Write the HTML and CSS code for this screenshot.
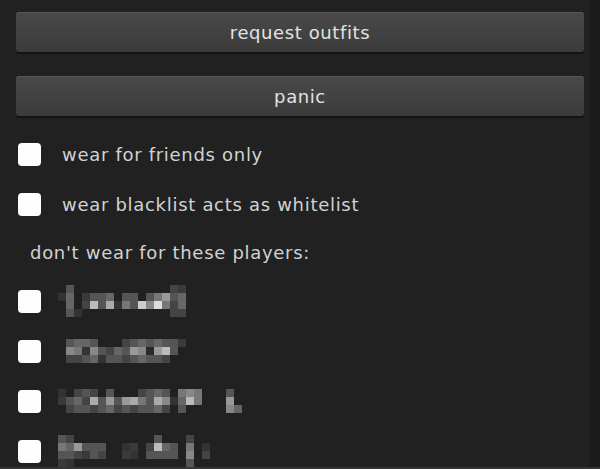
FILE: index.html
```html
<!DOCTYPE html>
<html lang="en">
<head>
    <meta charset="UTF-8">
    <title>Outfits</title>
    <link rel="stylesheet" href="styles.css">
</head>
<body>
    <div class="window">
        <div class="panel">
            <button class="btn first">request outfits</button>
            <button class="btn">panic</button>

            <label class="row opt-first">
                <span class="box"></span>
                <span class="text">wear for friends only</span>
            </label>
            <label class="row">
                <span class="box"></span>
                <span class="text">wear blacklist acts as whitelist</span>
            </label>

            <div class="caption">don't wear for these players:</div>

            <label class="row">
                <span class="box"></span>
                <svg class="name" width="136" height="32" viewBox="0 0 136 32">
                    <rect x="8" y="0" width="8" height="8" fill="#555"/>
                    <rect x="112" y="0" width="8" height="8" fill="#444"/>
                    <rect x="120" y="0" width="8" height="8" fill="#3a3a3a"/>
                    <rect x="0" y="8" width="8" height="8" fill="#333"/>
                    <rect x="8" y="8" width="8" height="8" fill="#666"/>
                    <rect x="24" y="8" width="8" height="8" fill="#3a3a3a"/>
                    <rect x="32" y="8" width="8" height="8" fill="#555"/>
                    <rect x="40" y="8" width="8" height="8" fill="#555"/>
                    <rect x="48" y="8" width="8" height="8" fill="#666"/>
                    <rect x="64" y="8" width="8" height="8" fill="#555"/>
                    <rect x="72" y="8" width="8" height="8" fill="#555"/>
                    <rect x="88" y="8" width="8" height="8" fill="#555"/>
                    <rect x="96" y="8" width="8" height="8" fill="#777"/>
                    <rect x="104" y="8" width="8" height="8" fill="#999"/>
                    <rect x="112" y="8" width="8" height="8" fill="#555"/>
                    <rect x="120" y="8" width="8" height="8" fill="#666"/>
                    <rect x="8" y="16" width="8" height="8" fill="#666"/>
                    <rect x="24" y="16" width="8" height="8" fill="#444"/>
                    <rect x="32" y="16" width="8" height="8" fill="#bbb"/>
                    <rect x="40" y="16" width="8" height="8" fill="#555"/>
                    <rect x="48" y="16" width="8" height="8" fill="#aaa"/>
                    <rect x="56" y="16" width="8" height="8" fill="#333"/>
                    <rect x="64" y="16" width="8" height="8" fill="#777"/>
                    <rect x="72" y="16" width="8" height="8" fill="#555"/>
                    <rect x="80" y="16" width="8" height="8" fill="#ccc"/>
                    <rect x="88" y="16" width="8" height="8" fill="#888"/>
                    <rect x="96" y="16" width="8" height="8" fill="#ddd"/>
                    <rect x="104" y="16" width="8" height="8" fill="#777"/>
                    <rect x="112" y="16" width="8" height="8" fill="#444"/>
                    <rect x="120" y="16" width="8" height="8" fill="#666"/>
                    <rect x="8" y="24" width="8" height="8" fill="#555"/>
                    <rect x="16" y="24" width="8" height="8" fill="#333"/>
                    <rect x="112" y="24" width="8" height="8" fill="#444"/>
                    <rect x="120" y="24" width="8" height="8" fill="#444"/>
                </svg>
            </label>
            <label class="row">
                <span class="box"></span>
                <svg class="name" width="136" height="24" viewBox="0 0 136 24">
                    <rect x="8" y="0" width="8" height="8" fill="#555"/>
                    <rect x="16" y="0" width="8" height="8" fill="#666"/>
                    <rect x="24" y="0" width="8" height="8" fill="#666"/>
                    <rect x="32" y="0" width="8" height="8" fill="#555"/>
                    <rect x="64" y="0" width="8" height="8" fill="#444"/>
                    <rect x="72" y="0" width="8" height="8" fill="#555"/>
                    <rect x="80" y="0" width="8" height="8" fill="#666"/>
                    <rect x="88" y="0" width="8" height="8" fill="#555"/>
                    <rect x="96" y="0" width="8" height="8" fill="#666"/>
                    <rect x="104" y="0" width="8" height="8" fill="#555"/>
                    <rect x="112" y="0" width="8" height="8" fill="#555"/>
                    <rect x="120" y="0" width="8" height="8" fill="#3a3a3a"/>
                    <rect x="8" y="8" width="8" height="8" fill="#888"/>
                    <rect x="16" y="8" width="8" height="8" fill="#777"/>
                    <rect x="24" y="8" width="8" height="8" fill="#333"/>
                    <rect x="32" y="8" width="8" height="8" fill="#888"/>
                    <rect x="40" y="8" width="8" height="8" fill="#555"/>
                    <rect x="48" y="8" width="8" height="8" fill="#444"/>
                    <rect x="56" y="8" width="8" height="8" fill="#666"/>
                    <rect x="64" y="8" width="8" height="8" fill="#555"/>
                    <rect x="72" y="8" width="8" height="8" fill="#999"/>
                    <rect x="80" y="8" width="8" height="8" fill="#888"/>
                    <rect x="88" y="8" width="8" height="8" fill="#2a2a2a"/>
                    <rect x="96" y="8" width="8" height="8" fill="#999"/>
                    <rect x="104" y="8" width="8" height="8" fill="#bbb"/>
                    <rect x="112" y="8" width="8" height="8" fill="#555"/>
                    <rect x="8" y="16" width="8" height="8" fill="#444"/>
                    <rect x="16" y="16" width="8" height="8" fill="#444"/>
                    <rect x="24" y="16" width="8" height="8" fill="#555"/>
                    <rect x="32" y="16" width="8" height="8" fill="#666"/>
                    <rect x="40" y="16" width="8" height="8" fill="#333"/>
                    <rect x="48" y="16" width="8" height="8" fill="#555"/>
                    <rect x="56" y="16" width="8" height="8" fill="#555"/>
                    <rect x="64" y="16" width="8" height="8" fill="#444"/>
                    <rect x="72" y="16" width="8" height="8" fill="#555"/>
                    <rect x="80" y="16" width="8" height="8" fill="#666"/>
                    <rect x="88" y="16" width="8" height="8" fill="#555"/>
                    <rect x="96" y="16" width="8" height="8" fill="#555"/>
                    <rect x="104" y="16" width="8" height="8" fill="#444"/>
                </svg>
            </label>
            <label class="row">
                <span class="box"></span>
                <svg class="name" width="184" height="24" viewBox="0 0 184 24">
                    <rect x="0" y="0" width="8" height="8" fill="#333"/>
                    <rect x="16" y="0" width="8" height="8" fill="#444"/>
                    <rect x="24" y="0" width="8" height="8" fill="#555"/>
                    <rect x="32" y="0" width="8" height="8" fill="#444"/>
                    <rect x="48" y="0" width="8" height="8" fill="#555"/>
                    <rect x="80" y="0" width="8" height="8" fill="#444"/>
                    <rect x="88" y="0" width="8" height="8" fill="#555"/>
                    <rect x="96" y="0" width="8" height="8" fill="#666"/>
                    <rect x="104" y="0" width="8" height="8" fill="#555"/>
                    <rect x="120" y="0" width="8" height="8" fill="#777"/>
                    <rect x="128" y="0" width="8" height="8" fill="#888"/>
                    <rect x="136" y="0" width="8" height="8" fill="#777"/>
                    <rect x="168" y="0" width="8" height="8" fill="#555"/>
                    <rect x="0" y="8" width="8" height="8" fill="#3a3a3a"/>
                    <rect x="8" y="8" width="8" height="8" fill="#555"/>
                    <rect x="16" y="8" width="8" height="8" fill="#666"/>
                    <rect x="24" y="8" width="8" height="8" fill="#444"/>
                    <rect x="32" y="8" width="8" height="8" fill="#aaa"/>
                    <rect x="40" y="8" width="8" height="8" fill="#555"/>
                    <rect x="48" y="8" width="8" height="8" fill="#999"/>
                    <rect x="56" y="8" width="8" height="8" fill="#555"/>
                    <rect x="64" y="8" width="8" height="8" fill="#999"/>
                    <rect x="72" y="8" width="8" height="8" fill="#aaa"/>
                    <rect x="80" y="8" width="8" height="8" fill="#777"/>
                    <rect x="88" y="8" width="8" height="8" fill="#555"/>
                    <rect x="96" y="8" width="8" height="8" fill="#aaa"/>
                    <rect x="104" y="8" width="8" height="8" fill="#888"/>
                    <rect x="112" y="8" width="8" height="8" fill="#333"/>
                    <rect x="120" y="8" width="8" height="8" fill="#666"/>
                    <rect x="128" y="8" width="8" height="8" fill="#bbb"/>
                    <rect x="136" y="8" width="8" height="8" fill="#777"/>
                    <rect x="168" y="8" width="8" height="8" fill="#999"/>
                    <rect x="8" y="16" width="8" height="8" fill="#444"/>
                    <rect x="16" y="16" width="8" height="8" fill="#555"/>
                    <rect x="24" y="16" width="8" height="8" fill="#555"/>
                    <rect x="32" y="16" width="8" height="8" fill="#444"/>
                    <rect x="40" y="16" width="8" height="8" fill="#555"/>
                    <rect x="48" y="16" width="8" height="8" fill="#666"/>
                    <rect x="56" y="16" width="8" height="8" fill="#444"/>
                    <rect x="64" y="16" width="8" height="8" fill="#555"/>
                    <rect x="72" y="16" width="8" height="8" fill="#444"/>
                    <rect x="80" y="16" width="8" height="8" fill="#555"/>
                    <rect x="88" y="16" width="8" height="8" fill="#555"/>
                    <rect x="96" y="16" width="8" height="8" fill="#666"/>
                    <rect x="104" y="16" width="8" height="8" fill="#444"/>
                    <rect x="120" y="16" width="8" height="8" fill="#555"/>
                    <rect x="168" y="16" width="8" height="8" fill="#888"/>
                    <rect x="176" y="16" width="8" height="8" fill="#666"/>
                </svg>
            </label>
            <label class="row">
                <span class="box"></span>
                <svg class="name" width="152" height="32" viewBox="0 0 152 32">
                    <rect x="0" y="0" width="8" height="8" fill="#555"/>
                    <rect x="8" y="0" width="8" height="8" fill="#444"/>
                    <rect x="96" y="0" width="8" height="8" fill="#555"/>
                    <rect x="128" y="0" width="8" height="8" fill="#444"/>
                    <rect x="0" y="8" width="8" height="8" fill="#777"/>
                    <rect x="8" y="8" width="8" height="8" fill="#666"/>
                    <rect x="16" y="8" width="8" height="8" fill="#999"/>
                    <rect x="24" y="8" width="8" height="8" fill="#555"/>
                    <rect x="32" y="8" width="8" height="8" fill="#555"/>
                    <rect x="40" y="8" width="8" height="8" fill="#555"/>
                    <rect x="64" y="8" width="8" height="8" fill="#333"/>
                    <rect x="72" y="8" width="8" height="8" fill="#3a3a3a"/>
                    <rect x="88" y="8" width="8" height="8" fill="#444"/>
                    <rect x="96" y="8" width="8" height="8" fill="#bbb"/>
                    <rect x="104" y="8" width="8" height="8" fill="#666"/>
                    <rect x="112" y="8" width="8" height="8" fill="#555"/>
                    <rect x="128" y="8" width="8" height="8" fill="#777"/>
                    <rect x="144" y="8" width="8" height="8" fill="#333"/>
                    <rect x="0" y="16" width="8" height="8" fill="#555"/>
                    <rect x="8" y="16" width="8" height="8" fill="#555"/>
                    <rect x="16" y="16" width="8" height="8" fill="#444"/>
                    <rect x="24" y="16" width="8" height="8" fill="#3a3a3a"/>
                    <rect x="32" y="16" width="8" height="8" fill="#555"/>
                    <rect x="40" y="16" width="8" height="8" fill="#444"/>
                    <rect x="64" y="16" width="8" height="8" fill="#3a3a3a"/>
                    <rect x="72" y="16" width="8" height="8" fill="#333"/>
                    <rect x="88" y="16" width="8" height="8" fill="#555"/>
                    <rect x="96" y="16" width="8" height="8" fill="#555"/>
                    <rect x="104" y="16" width="8" height="8" fill="#555"/>
                    <rect x="112" y="16" width="8" height="8" fill="#555"/>
                    <rect x="128" y="16" width="8" height="8" fill="#888"/>
                    <rect x="144" y="16" width="8" height="8" fill="#444"/>
                    <rect x="0" y="24" width="8" height="8" fill="#3a3a3a"/>
                    <rect x="8" y="24" width="8" height="8" fill="#333"/>
                    <rect x="128" y="24" width="8" height="8" fill="#555"/>
                </svg>
            </label>
        </div>
        <div class="edge"></div>
    </div>
</body>
</html>
```

FILE: styles.css
```css
*{
    margin: 0;
    padding: 0;
    box-sizing: border-box;
}
body{
    background: #212121;
    font-family: "DejaVu Sans", sans-serif;
    color: #d2d2d2;
}
.window{
    display: flex;
    height: 469px;
    overflow: hidden;
    border-bottom: 2px solid #363636;
}
.panel{
    width: 590px;
    padding: 12px 6px 0 16px;
    display: flex;
    flex-direction: column;
}
.edge{
    width: 10px;
    background: #1b1b1b;
}
.btn{
    height: 40px;
    width: 568px;
    flex-shrink: 0;
    border: none;
    border-top: 1px solid #585858;
    border-radius: 3px;
    background: linear-gradient(#494949, #3b3b3b);
    box-shadow: 0 2px 0 #141414;
    color: #e2e2e2;
    font-family: "DejaVu Sans", sans-serif;
    font-size: 18px;
    letter-spacing: 0.6px;
    margin-top: 24px;
}
.btn.first{
    margin-top: 0;
}
.row{
    height: 50px;
    flex-shrink: 0;
    display: flex;
    align-items: center;
    padding-left: 2px;
    gap: 21px;
}
.opt-first{
    margin-top: 13px;
}
.box{
    width: 23px;
    height: 23px;
    border-radius: 4px;
    background: #fdfdfd;
    flex-shrink: 0;
}
.text{
    font-size: 18px;
    letter-spacing: 0.7px;
}
.name{
    margin-left: -4px;
    display: block;
}
.caption{
    height: 47px;
    flex-shrink: 0;
    display: flex;
    align-items: center;
    padding-left: 14px;
    font-size: 18px;
    letter-spacing: 0.7px;
}
```
